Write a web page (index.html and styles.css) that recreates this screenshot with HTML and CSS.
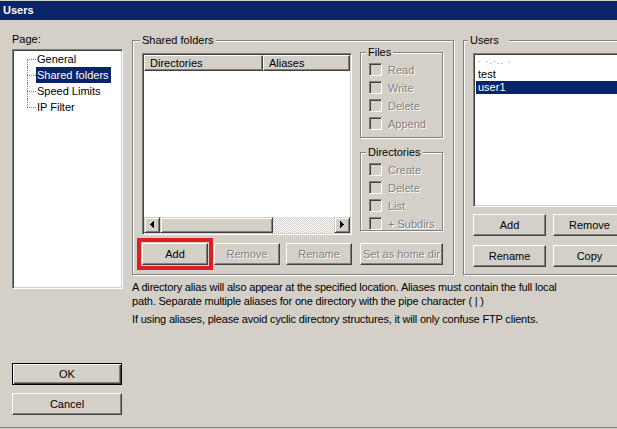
FILE: index.html
```html
<!DOCTYPE html>
<html lang="en">

<head>
  <meta charset="UTF-8" />
  <meta name="viewport" content="width=device-width, initial-scale=1.0" />
  <title>Users</title>
  <link rel="stylesheet" href="styles.css">
</head>

<body>
  <div class="window">
    <div class="titlebar">Users</div>
    <div class="content">
      <div class="sidebar">
        <div class="page-label">Page:</div>
        <div class="tree sunken">
          <ul class="tree-list">
            <li class="tree-item"><span>General</span></li>
            <li class="tree-item"><span class="selected">Shared folders</span></li>
            <li class="tree-item"><span>Speed Limits</span></li>
            <li class="tree-item"><span>IP Filter</span></li>
          </ul>
        </div>
        <div class="dialog-buttons">
          <button class="button default">OK</button>
          <button class="button">Cancel</button>
        </div>
      </div>

      <div class="main">
        <div class="groups">
          <fieldset class="group shared">
            <legend>Shared folders</legend>
            <div class="shared-grid">
              <div class="listview sunken">
                <div class="listview-header">
                  <div class="col col-dir">Directories</div>
                  <div class="col col-alias">Aliases</div>
                </div>
                <div class="listview-body"></div>
                <div class="hscroll">
                  <div class="scroll-btn">
                    <svg width="12" height="12" viewBox="0 0 12 12" shape-rendering="crispEdges"><path d="M4 5h1v1h-1z M5 4h1v3h-1z M6 3h1v5h-1z M7 2h1v7h-1z" fill="#000"/></svg>
                  </div>
                  <div class="scroll-thumb"></div>
                  <div class="scroll-track"></div>
                  <div class="scroll-btn">
                    <svg width="12" height="12" viewBox="0 0 12 12" shape-rendering="crispEdges"><path d="M7 5h1v1h-1z M6 4h1v3h-1z M5 3h1v5h-1z M4 2h1v7h-1z" fill="#000"/></svg>
                  </div>
                </div>
              </div>

              <div class="perms">
                <fieldset class="group small files">
                  <legend>Files</legend>
                  <label class="check"><span class="box"></span>Read</label>
                  <label class="check"><span class="box"></span>Write</label>
                  <label class="check"><span class="box"></span>Delete</label>
                  <label class="check"><span class="box"></span>Append</label>
                </fieldset>
                <fieldset class="group small dirs">
                  <legend>Directories</legend>
                  <label class="check"><span class="box"></span>Create</label>
                  <label class="check"><span class="box"></span>Delete</label>
                  <label class="check"><span class="box"></span>List</label>
                  <label class="check"><span class="box"></span>+ Subdirs</label>
                </fieldset>
              </div>

              <div class="folder-buttons">
                <button class="button marked">Add</button>
                <button class="button" disabled>Remove</button>
                <button class="button" disabled>Rename</button>
              </div>
              <button class="button home" disabled>Set as home dir</button>
            </div>
          </fieldset>

          <fieldset class="group users">
            <legend>Users</legend>
            <ul class="userlist sunken">
              <li class="hidden-name">·  ·.·.. ·</li>
              <li>test</li>
              <li class="selected">user1</li>
            </ul>
            <div class="user-buttons">
              <button class="button">Add</button>
              <button class="button">Remove</button>
              <button class="button">Rename</button>
              <button class="button">Copy</button>
            </div>
          </fieldset>
        </div>

        <p class="note">A directory alias will also appear at the specified location. Aliases must contain the full local<br>path. Separate multiple aliases for one directory with the pipe character ( | )</p>
        <p class="note second">If using aliases, please avoid cyclic directory structures, it will only confuse FTP clients.</p>
      </div>
    </div>
  </div>
</body>

</html>
```

FILE: styles.css
```css
body {
  margin: 0;
  font-family: "Liberation Sans", Arial, sans-serif;
  font-size: 11px;
  color: #000;
  background-color: #d4d0c8;
}

.window {
  width: 617px;
  height: 427px;
  overflow: hidden;
  border-bottom: 1px solid #808080;
}

.titlebar {
  margin-top: 1px;
  height: 19px;
  line-height: 19px;
  padding-left: 3px;
  background-color: #0a246a;
  color: #fff;
  font-weight: bold;
}

.content {
  display: flex;
  padding-left: 12px;
}

/* 3d borders */
.sunken {
  box-sizing: border-box;
  border: 1px solid;
  border-color: #808080 #fff #fff #808080;
  box-shadow: inset 1px 1px 0 #404040, inset -1px -1px 0 #d4d0c8;
  background-color: #fff;
}

.button {
  box-sizing: border-box;
  height: 22px;
  padding: 0;
  font-family: inherit;
  font-size: 11px;
  color: #000;
  background-color: #d4d0c8;
  border: 1px solid;
  border-color: #fff #404040 #404040 #fff;
  box-shadow: inset -1px -1px 0 #808080;
  border-radius: 0;
}

.button:disabled {
  color: #808080;
  text-shadow: 1px 1px 0 #fff;
}

.button.default {
  border: 1px solid #000;
  box-shadow: inset 1px 1px 0 #fff, inset -1px -1px 0 #404040, inset -2px -2px 0 #808080;
}

.button.marked {
  outline: 4px solid #dc1e26;
  outline-offset: 1px;
}

/* left column */
.sidebar {
  width: 111px;
  flex-shrink: 0;
}

.page-label {
  margin-top: 13px;
  line-height: 13px;
}

.tree {
  margin-top: 3px;
  height: 240px;
  padding: 1px 1px;
}

.tree-list {
  list-style: none;
  margin: 0;
  padding: 0;
}

.tree-item {
  position: relative;
  height: 16px;
  line-height: 16px;
  padding-left: 22px;
}

.tree-item::before {
  content: "";
  position: absolute;
  left: 13px;
  top: 8px;
  width: 9px;
  border-top: 1px dotted #808080;
}

.tree-item::after {
  content: "";
  position: absolute;
  left: 13px;
  top: 0;
  bottom: 0;
  border-left: 1px dotted #808080;
}

.tree-item:first-child::after {
  top: 8px;
}

.tree-item:last-child::after {
  bottom: 8px;
}

.tree-item span {
  display: inline-block;
  padding: 0 2px 0 1px;
}

.tree-item .selected {
  background-color: #0a246a;
  color: #fff;
}

.dialog-buttons {
  display: flex;
  flex-direction: column;
  gap: 8px;
  margin-top: 74px;
}

.dialog-buttons .button {
  width: 110px;
}

/* main area */
.main {
  margin-left: 9px;
}

.groups {
  display: flex;
  gap: 9px;
  margin-top: 14px;
}

.group {
  flex-shrink: 0;
  box-sizing: border-box;
  margin: 0;
  border: 1px solid #808080;
  box-shadow: 1px 1px 0 #fff, inset 1px 1px 0 #fff;
}

.group legend {
  padding: 0 2px;
  line-height: 12px;
  background-color: #d4d0c8;
}

.shared {
  width: 322px;
  padding: 0 10px 9px 9px;
}

.shared legend {
  margin-left: -2px;
}

.shared-grid {
  display: grid;
  grid-template-columns: 210px 83px;
  column-gap: 8px;
  row-gap: 8px;
}

.listview {
  display: flex;
  flex-direction: column;
  margin-top: 7px;
  height: 182px;
  padding: 1px;
}

.listview-header {
  display: flex;
  height: 16px;
}

.col {
  box-sizing: border-box;
  height: 16px;
  line-height: 14px;
  padding-left: 5px;
  background-color: #d4d0c8;
  border: 1px solid;
  border-color: #fff #404040 #404040 #fff;
  box-shadow: inset -1px -1px 0 #808080;
}

.col-dir {
  width: 119px;
}

.col-alias {
  flex: 1;
}

.listview-body {
  flex: 1;
}

.hscroll {
  display: flex;
  height: 16px;
}

.scroll-btn,
.scroll-thumb {
  box-sizing: border-box;
  display: flex;
  align-items: center;
  justify-content: center;
  height: 16px;
  background-color: #d4d0c8;
  border: 1px solid;
  border-color: #d4d0c8 #404040 #404040 #d4d0c8;
  box-shadow: inset 1px 1px 0 #fff, inset -1px -1px 0 #808080;
}

.scroll-btn {
  width: 16px;
}

.scroll-thumb {
  width: 113px;
}

.scroll-track {
  flex: 1;
  background: conic-gradient(#fff 25%, #d4d0c8 0 50%, #fff 0 75%, #d4d0c8 0) 0 0 / 2px 2px;
}

.perms {
  display: flex;
  flex-direction: column;
  gap: 8px;
}

.small {
  padding: 5px 0 7px 8px;
  display: flex;
  flex-direction: column;
  gap: 5px;
}

.small legend {
  margin-left: -3px;
}

.small.dirs {
  padding-bottom: 0;
}

.check {
  display: flex;
  align-items: center;
  gap: 6px;
  height: 13px;
  color: #808080;
  text-shadow: 1px 1px 0 #fff;
}

.box {
  box-sizing: border-box;
  width: 13px;
  height: 13px;
  border: 1px solid;
  border-color: #808080 #fff #fff #808080;
  box-shadow: inset 1px 1px 0 #404040, inset -1px -1px 0 #d4d0c8;
  background-color: #d4d0c8;
}

.folder-buttons {
  display: flex;
  justify-content: space-between;
}

.folder-buttons .button {
  width: 66px;
}

/* users */
.users {
  width: 172px;
  padding: 0 9px 7px 9px;
}

.users legend {
  margin-left: -5px;
  padding-right: 10px;
}

.userlist {
  list-style: none;
  margin: 7px 0 0;
  padding: 1px 2px;
  height: 154px;
  width: 152px;
}

.userlist li {
  height: 13px;
  line-height: 13px;
  padding-left: 2px;
}

.userlist .selected {
  background-color: #0a246a;
  color: #fff;
}

.userlist .hidden-name {
  color: #8a8a8a;
  font-size: 9px;
  letter-spacing: 1px;
}

.user-buttons {
  display: grid;
  grid-template-columns: 73px 73px;
  column-gap: 7px;
  row-gap: 9px;
  margin-top: 7px;
}

.note {
  margin: 5px 0 0;
  line-height: 14px;
  white-space: nowrap;
  letter-spacing: -0.18px;
}

.note.second {
  margin-top: 4px;
}
```
